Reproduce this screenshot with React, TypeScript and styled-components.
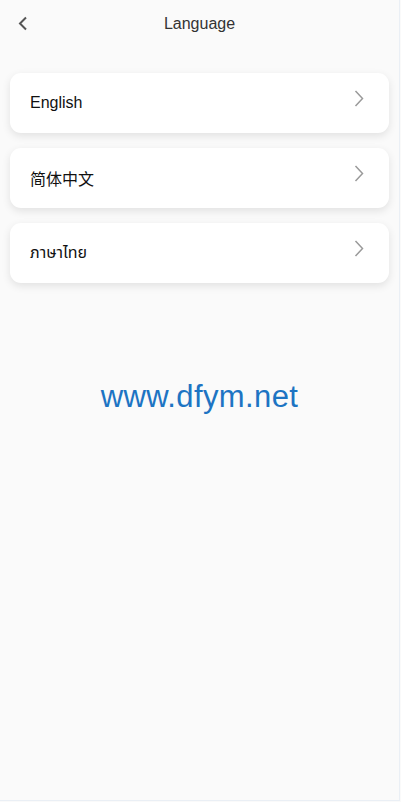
import React from 'react'
import styled, { createGlobalStyle } from 'styled-components'

const GlobalStyle = createGlobalStyle`
    html, body {
        margin: 0;
        padding: 0;
        background: #fafafa;
    }
    body {
        font-family: "Liberation Sans", Arial, "Noto Sans CJK SC", sans-serif;
    }
`

const languages = ['English', '简体中文', 'ภาษาไทย']

const App: React.FC = () => {
    return (
        <Page>
            <GlobalStyle />
            <Header>
                <BackButton aria-label="back">
                    <svg width="10" height="15" viewBox="0 0 10 15" fill="none">
                        <path d="M8 1.5L2 7.5L8 13.5" stroke="#555" strokeWidth="2" />
                    </svg>
                </BackButton>
                <Title>Language</Title>
            </Header>
            <List>
                {languages.map(name => (
                    <Card key={name}>
                        <Name>{name}</Name>
                        <Chevron width="10" height="17" viewBox="0 0 10 17" fill="none">
                            <path d="M1.5 1L8.5 8.5L1.5 16" stroke="#9a9a9a" strokeWidth="1.5" />
                        </Chevron>
                    </Card>
                ))}
            </List>
            <Watermark>www.dfym.net</Watermark>
        </Page>
    )
}
export default App

const Page = styled.div`
    position: relative;
    width: 400px;
    min-height: 801px;
    box-sizing: border-box;
    background: #fafafa;
    border-right: 1px solid #eaeff5;
    border-bottom: 1px solid #eaeff5;
`
const Header = styled.div`
    position: relative;
    height: 47px;
    display: flex;
    align-items: center;
    justify-content: center;
`
const BackButton = styled.button`
    position: absolute;
    left: 13px;
    top: 14px;
    width: 20px;
    height: 18px;
    padding: 0;
    border: none;
    background: none;
    display: flex;
    align-items: center;
    justify-content: center;
`
const Title = styled.h1`
    margin: 0;
    font-size: 16px;
    font-weight: normal;
    color: #333;
`
const List = styled.div`
    display: flex;
    flex-direction: column;
    gap: 15px;
    padding: 26px 10px 0 10px;
`
const Card = styled.div`
    height: 60px;
    border-radius: 11px;
    background: #fff;
    box-shadow: 0 3px 8px rgba(0, 0, 0, 0.1);
    display: flex;
    align-items: center;
    justify-content: space-between;
    padding: 0 25px 0 20px;
`
const Name = styled.span`
    font-size: 16px;
    color: #111;
    font-family: "Liberation Sans", Arial, "Noto Sans CJK SC", "Noto Sans Thai", sans-serif;
`
const Chevron = styled.svg`
    margin-top: -10px;
`
const Watermark = styled.div`
    position: absolute;
    left: 0;
    right: 0;
    top: 379px;
    text-align: center;
    font-size: 31px;
    letter-spacing: 0.4px;
    color: #1d74c3;
    pointer-events: none;
`
